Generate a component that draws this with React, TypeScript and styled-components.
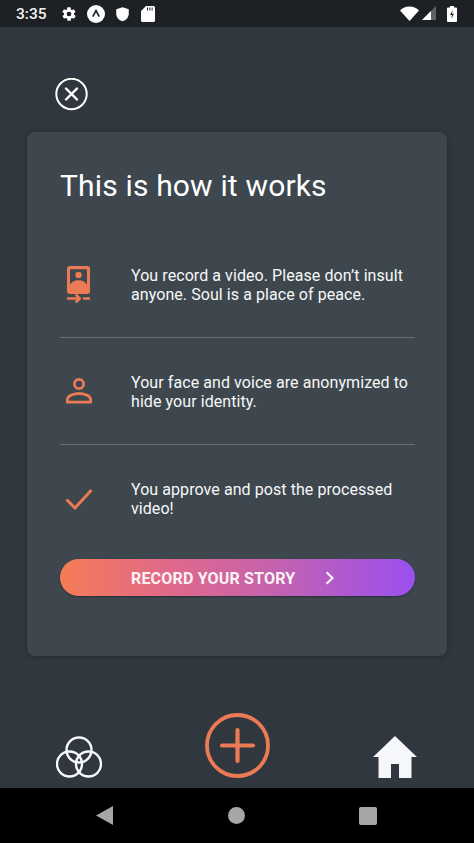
import React from "react";
import styled, { createGlobalStyle } from "styled-components";

const Global = createGlobalStyle`
  html, body { margin: 0; padding: 0; background: #31373f; }
  * { box-sizing: border-box; }
`;

const Screen = styled.div`
  width: 474px;
  height: 843px;
  display: flex;
  flex-direction: column;
  overflow: hidden;
  background: #31373f;
  font-family: Roboto, "Liberation Sans", sans-serif;
  color: #fff;
`;

const StatusBar = styled.div`
  height: 27px;
  flex: none;
  background: #1d2025;
  display: flex;
  align-items: center;
  padding: 0 15px 0 16px;
`;

const Clock = styled.span`
  font-size: 15.5px;
  font-weight: 500;
  color: #f2f2f2;
  margin-right: 14px;
`;

const StatusIcons = styled.div`
  display: flex;
  align-items: center;
  gap: 10px;
`;

const StatusRight = styled.div`
  margin-left: auto;
  display: flex;
  align-items: center;
  gap: 2px;
`;

const Main = styled.div`
  flex: 1;
  display: flex;
  flex-direction: column;
  padding: 51px 27px 0;
`;

const CloseButton = styled.div`
  width: 33px;
  height: 33px;
  margin-left: 28px;
  margin-bottom: 21px;
  display: flex;
`;

const Card = styled.div`
  height: 524px;
  background: #3e474e;
  border-radius: 8px;
  box-shadow: 0 1px 4px rgba(0, 0, 0, 0.25);
  padding: 36px 32px 0 33px;
  display: flex;
  flex-direction: column;
`;

const Title = styled.h1`
  margin: 0 0 61px;
  font-size: 30px;
  line-height: 36px;
  font-weight: 400;
  letter-spacing: 0.16px;
  color: #fff;
`;

const Rows = styled.div`
  display: flex;
  flex-direction: column;
`;

const Row = styled.div`
  height: 107px;
  padding-top: 34px;
  display: flex;
  align-items: flex-start;
  border-top: 1px solid #666e75;
  &:first-child {
    height: 72px;
    padding-top: 0;
    border-top: none;
  }
`;

const RowIcon = styled.div<{ $left: number }>`
  width: 71px;
  height: 38px;
  flex: none;
  display: flex;
  align-items: center;
  padding-left: ${(p) => p.$left}px;
`;

const RowText = styled.div`
  margin-top: 1px;
  font-size: 16px;
  line-height: 19px;
  color: #f7f8f8;
  width: 285px;
  letter-spacing: 0.07px;
  white-space: pre-line;
`;

const RecordButton = styled.div`
  height: 37px;
  margin-top: 8px;
  padding-top: 1px;
  border-radius: 19px;
  background: linear-gradient(90deg, #f57c54 0%, #e1698a 30%, #c463ad 60%, #9a50ef 100%);
  box-shadow: 0 1px 2px rgba(20, 20, 40, 0.55);
  display: flex;
  align-items: center;
  padding-left: 71px;
  font-size: 16px;
  font-weight: 700;
  letter-spacing: 0.18px;
  color: #fbf3f6;
`;

const Chevron = styled.span`
  display: flex;
  margin-left: 30px;
`;

const TabBar = styled.div`
  height: 132px;
  flex: none;
  display: flex;
  align-items: flex-end;
  justify-content: space-between;
  padding: 0 30px 10px 29px;
`;

const NavBar = styled.div`
  height: 55px;
  flex: none;
  background: #000;
  display: flex;
  align-items: center;
  padding-left: 96px;
`;

const NavSlot = styled.div<{ $w: number }>`
  width: ${(p) => p.$w}px;
  display: flex;
`;

const O = "#ec7a55";

export default function App() {
  return (
    <Screen>
      <Global />
      <StatusBar>
        <Clock>3:35</Clock>
        <StatusIcons>
          <svg width="16" height="16" viewBox="0 0 24 24" fill="#fff">
            <path d="M19.4 13a7.5 7.5 0 0 0 0-2l2.1-1.6a.5.5 0 0 0 .1-.6l-2-3.5a.5.5 0 0 0-.6-.2l-2.5 1a7.3 7.3 0 0 0-1.7-1l-.4-2.7a.5.5 0 0 0-.5-.4h-4a.5.5 0 0 0-.5.4l-.4 2.7a7.3 7.3 0 0 0-1.7 1l-2.5-1a.5.5 0 0 0-.6.2l-2 3.5a.5.5 0 0 0 .1.6L4.6 11a7.5 7.5 0 0 0 0 2l-2.1 1.6a.5.5 0 0 0-.1.6l2 3.5c.1.2.4.3.6.2l2.5-1c.5.4 1.1.7 1.7 1l.4 2.7c0 .2.3.4.5.4h4c.2 0 .5-.2.5-.4l.4-2.7c.6-.3 1.2-.6 1.7-1l2.5 1c.2.1.5 0 .6-.2l2-3.5a.5.5 0 0 0-.1-.6zM12 15.5a3.5 3.5 0 1 1 0-7 3.5 3.5 0 0 1 0 7z" />
          </svg>
          <svg width="18" height="18" viewBox="0 0 18 18">
            <circle cx="9" cy="9" r="9" fill="#fff" />
            <path d="M5.8 11.6 9 5.6l3.2 6" fill="none" stroke="#22252a" strokeWidth="1.7" />
          </svg>
          <svg width="15" height="16" viewBox="0 0 24 24" fill="#fff">
            <path d="M12 1 2 4.5v7c0 6 4.3 10.5 10 12 5.7-1.5 10-6 10-12v-7z" />
          </svg>
          <svg width="14" height="16" viewBox="0 0 14 16" fill="#fff" style={{ marginLeft: 1 }}>
            <path d="M5 0h7.5A1.5 1.5 0 0 1 14 1.5v13a1.5 1.5 0 0 1-1.5 1.5h-11A1.5 1.5 0 0 1 0 14.5V5z" />
            <path d="M6.5 1.5v3M8.8 1.5v3M11.1 1.5v3" stroke="#22252a" strokeWidth="1" />
          </svg>
        </StatusIcons>
        <StatusRight>
          <svg width="19" height="15" viewBox="0 0 19 15">
            <path d="M0 4.5C2.5 2 5.8.5 9.5.5S16.5 2 19 4.5L9.5 15z" fill="#fff" />
          </svg>
          <svg width="15" height="15" viewBox="0 0 15 15" style={{ marginLeft: 1 }}>
            <path d="M14 0v14H0z" fill="#5d6064" />
            <path d="M9 5v9H0z" fill="#fff" />
          </svg>
          <svg width="10" height="16" viewBox="0 0 10 16" style={{ marginLeft: 8, marginRight: 2 }}>
            <path d="M3 0h4v1.5h2a1 1 0 0 1 1 1V15a1 1 0 0 1-1 1H1a1 1 0 0 1-1-1V2.5a1 1 0 0 1 1-1h2z" fill="#fff" />
            <path d="M5.8 4 3 9h2l-.8 4L7 7.8H5z" fill="#22252a" />
          </svg>
        </StatusRight>
      </StatusBar>

      <Main>
        <CloseButton>
          <svg width="33" height="33" viewBox="0 0 33 33" fill="none" stroke="#fff">
            <circle cx="16.5" cy="16" r="15.2" strokeWidth="2" />
            <path d="M11 10.5l11 11M22 10.5l-11 11" strokeWidth="2.4" strokeLinecap="round" />
          </svg>
        </CloseButton>
        <Card>
          <Title>This is how it works</Title>
          <Rows>
            <Row>
              <RowIcon $left={7}>
                <svg width="23" height="37" viewBox="0 0 23 37">
                  <path fill={O} fillRule="evenodd" d="M3 0h17a3 3 0 0 1 3 3v22a3 3 0 0 1-3 3H3a3 3 0 0 1-3-3V3a3 3 0 0 1 3-3zm.6 3.2a.6.6 0 0 0-.6.6v14.7c1.7-2.8 5-4.3 8.500-4.300s6.800 1.500 8.500 4.300V3.800a.6.600 0 0 0-.6-.6z" />
                  <circle cx="11.5" cy="9" r="3.2" fill={O} />
                  <path d="M0 32.5h12M8.7 28.5l4 4-4 4M16 32.5h7" stroke={O} strokeWidth="2.6" fill="none" />
                </svg>
              </RowIcon>
              <RowText>{"You record a video. Please don’t insult\nanyone. Soul is a place of peace."}</RowText>
            </Row>
            <Row>
              <RowIcon $left={6}>
                <svg width="26" height="26" viewBox="0 0 26 26" fill="none" stroke={O} strokeWidth="2.8">
                  <circle cx="13" cy="6" r="4.6" />
                  <path d="M1.4 24.2v-3c0-3.8 7-5.7 11.6-5.7s11.6 1.9 11.6 5.7v3z" />
                </svg>
              </RowIcon>
              <RowText>{"Your face and voice are anonymized to\nhide your identity."}</RowText>
            </Row>
            <Row>
              <RowIcon $left={5}>
                <svg width="28" height="22" viewBox="0 0 28 22" fill="none" stroke={O} strokeWidth="3" style={{ marginTop: 2 }}>
                  <path d="M1.5 11.5 10 20 26.5 2" />
                </svg>
              </RowIcon>
              <RowText>{"You approve and post the processed\nvideo!"}</RowText>
            </Row>
          </Rows>
          <RecordButton>
            RECORD YOUR STORY
            <Chevron>
              <svg width="10" height="14" viewBox="0 0 10 14" fill="none" stroke="#fbeef8" strokeWidth="2.2">
                <path d="M1.5 1.2 7.5 7l-6 5.800" />
              </svg>
            </Chevron>
          </RecordButton>
        </Card>
        <TabBar>
          <svg width="46" height="42" viewBox="0 0 46 42" fill="none" stroke="#f6f8fa" strokeWidth="2.4">
            <circle cx="23" cy="14" r="12.5" />
            <circle cx="13.5" cy="28" r="12.5" />
            <circle cx="32.5" cy="28" r="12.5" />
          </svg>
          <svg width="65" height="65" viewBox="0 0 65 65" fill="none" stroke={O} strokeLinecap="round">
            <circle cx="32.5" cy="32.5" r="30.5" strokeWidth="3.8" />
            <path d="M32.5 17v31M17 32.5h31" strokeWidth="4.2" />
          </svg>
          <svg width="44" height="42" viewBox="0 0 44 42" fill="#f5f7fa">
            <path d="M22 0 44 21h-5.5v21H26V28h-8v14H5.5V21H0z" />
          </svg>
        </TabBar>
      </Main>
      <NavBar>
        <NavSlot $w={132}>
          <svg width="17" height="19" viewBox="0 0 17 19" fill="#a6a6a6">
            <path d="M17 0v19L0 9.5z" />
          </svg>
        </NavSlot>
        <NavSlot $w={131}>
          <svg width="17" height="17" viewBox="0 0 17 17" fill="#a6a6a6">
            <circle cx="8.5" cy="8.5" r="8.5" />
          </svg>
        </NavSlot>
        <NavSlot $w={18}>
          <svg width="18" height="18" viewBox="0 0 18 18" fill="#a6a6a6">
            <rect width="18" height="18" rx="2" />
          </svg>
        </NavSlot>
      </NavBar>
    </Screen>
  );
}
